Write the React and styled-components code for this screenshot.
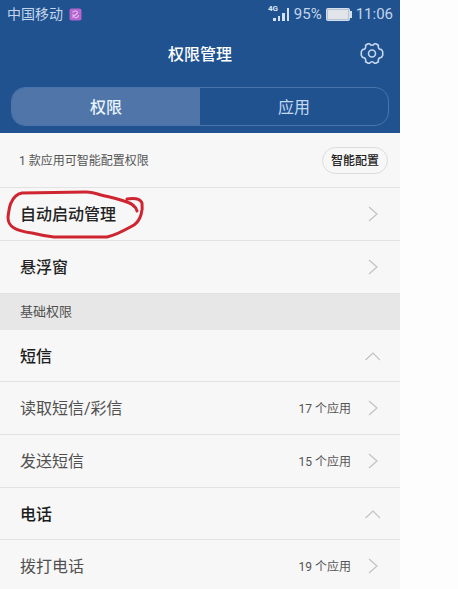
import React, { useState } from 'react';
import styled, { createGlobalStyle, css } from 'styled-components';

const blue = '#1f528f';
const hairline = '#e2e2e2';

const GlobalStyle = createGlobalStyle`
  * {
    box-sizing: border-box;
  }

  html {
    scrollbar-width: none;
  }

  body {
    margin: 0;
    background: #fdfdfd;
    font-family: Roboto, 'Noto Sans CJK SC', sans-serif;
  }

  button {
    font-family: inherit;
    cursor: pointer;
  }
`;

const Page = styled.div`
  padding-right: 58px;
`;

const Screen = styled.main`
  background: #f7f7f7;
  color: #222;
`;

const Header = styled.header`
  padding-bottom: 7px;
  background: ${blue};
  color: #fff;
`;

const StatusBar = styled.div`
  display: flex;
  align-items: center;
  justify-content: space-between;
  height: 28px;
  padding: 0 7px;
  color: #c3d5ec;
  font-size: 14px;
  line-height: 20px;
`;

const StatusGroup = styled.div`
  display: flex;
  align-items: center;
  gap: ${props => props.$gap}px;
`;

const Clock = styled.time`
  font-size: 15px;
`;

const Charge = styled.span`
  font-size: 15px;
`;

const TitleBar = styled.div`
  display: grid;
  grid-template-columns: 24px 1fr 24px;
  align-items: center;
  height: 52px;
  padding: 0 16px;
`;

const Title = styled.h1`
  grid-column: 2;
  margin: 0;
  padding-top: 2px;
  text-align: center;
  font-size: 16px;
  font-weight: 500;
  line-height: 24px;
`;

const IconButton = styled.button`
  display: flex;
  align-items: center;
  justify-content: center;
  width: 24px;
  height: 24px;
  padding: 0;
  border: 0;
  background: none;
  color: #c6d8ee;
`;

const Tabs = styled.div`
  display: flex;
  height: 39px;
  margin: 7px 11px 0;
  border: 1px solid #4a74ab;
  border-radius: 14px;
  overflow: hidden;
`;

const Tab = styled.button`
  flex: 1;
  padding: 2px 0 0;
  border: 0;
  background: none;
  color: #c3d9f3;
  font-size: 16px;
  line-height: 24px;

  ${props => props.$active && css`
    background: #5075a8;
    color: #e6f3fc;
    font-weight: 500;
  `}
`;

const Notice = styled.section`
  display: flex;
  align-items: center;
  justify-content: space-between;
  height: 55px;
  padding: 0 12px 0 19px;
  border-bottom: 1px solid ${hairline};
`;

const NoticeText = styled.p`
  margin: 0;
  padding-top: 2px;
  color: #555;
  font-size: 12px;
  line-height: 20px;
`;

const PillButton = styled.button`
  height: 27px;
  padding: 2px 8px 0;
  border: 1px solid #dcdcdc;
  border-radius: 14px;
  background: #f7f7f7;
  color: #222;
  font-size: 12px;
  font-weight: 500;
  line-height: 20px;
`;

const List = styled.ul`
  margin: 0;
  padding: 0;
  list-style: none;
`;

const Item = styled.li`
  position: relative;
  border-bottom: 1px solid ${hairline};
`;

const rowLayout = css`
  display: flex;
  align-items: center;
  width: 100%;
  padding: 0 20px;
  border: 0;
  background: none;
  text-align: left;
  text-decoration: none;
  font-size: 16px;
  line-height: 24px;
`;

const RowLink = styled.a`
  ${rowLayout}
  height: 52px;
  color: ${props => (props.$strong ? '#222' : '#505050')};
  font-weight: ${props => (props.$strong ? 500 : 400)};
`;

const GroupButton = styled.button`
  ${rowLayout}
  height: 51px;
  color: #1c1c1c;
  font-weight: 500;
`;

const Label = styled.span`
  flex: 1;
  padding-top: 2px;
`;

const Count = styled.span`
  margin-right: 15px;
  padding-top: 2px;
  color: #555;
  font-size: 12px;
  font-weight: 400;
`;

const SectionTitle = styled.h2`
  display: flex;
  align-items: center;
  height: 36px;
  margin: 0;
  padding: 0 20px;
  background: #e7e7e7;
  color: #505050;
  font-size: 13px;
  font-weight: 400;
  line-height: 20px;
`;

const Scribble = styled.svg`
  position: absolute;
  top: 0;
  left: 4px;
  pointer-events: none;
`;

const ChevronIcon = styled.svg`
  flex: none;
  fill: none;
  stroke: #c2c2c2;
  stroke-width: 1.2;
`;

const ChevronRight = () => (
  <ChevronIcon width="14" height="18" viewBox="0 0 14 18" aria-hidden="true">
    <path d="M3 2l8 7-8 7" />
  </ChevronIcon>
);

const ChevronUp = ({ open }) => (
  <ChevronIcon width="16" height="14" viewBox="0 0 16 14" aria-hidden="true">
    <path d={open ? 'M1.5 11L9 4l7 7' : 'M1.5 4L9 11l7-7'} />
  </ChevronIcon>
);

const AppBadge = () => (
  <svg width="13" height="13" viewBox="0 0 13 13" aria-hidden="true">
    <rect x="0.5" y="0.5" width="12" height="12" rx="2" fill="#b565d0" />
    <path d="M3.5 4.5c1-2 4-2 5-.5M3.5 9.5l5.5-5M9.5 7c0 2-2 3.2-4 2.5M3.5 6.5l2 2" fill="none" stroke="#e6bff0" strokeWidth="1.1" />
  </svg>
);

const SignalIcon = () => (
  <svg width="22" height="18" viewBox="0 0 22 18" role="img" aria-label="4G">
    <text x="0" y="6" fill="#dce8f6" fontSize="8" fontWeight="700">4G</text>
    <g fill="#d3e1f2">
      <rect x="5" y="13" width="3" height="3" />
      <rect x="10" y="11" width="2" height="5" />
      <rect x="14" y="8" width="3" height="8" />
      <rect x="19" y="3" width="2" height="13" />
    </g>
  </svg>
);

const BatteryIcon = () => (
  <svg width="26" height="13" viewBox="0 0 26 13" aria-hidden="true">
    <rect x="0.5" y="0.5" width="23" height="12" rx="1" fill="#b4c3d8" stroke="#d6e0ec" />
    <rect x="2" y="2" width="20" height="9" fill="#e1e4e9" />
    <rect x="24" y="3" width="2" height="7" fill="#d6e0ec" />
  </svg>
);

const GearIcon = () => (
  <svg width="24" height="24" viewBox="0 0 24 24" fill="none" stroke="currentColor" strokeWidth="1.6" strokeLinejoin="round" aria-hidden="true">
    <path d="M8.2 1.700h1.300Q12 4.900 14.500 1.700h1.300l2.600 1.500q-.8 4.300 3.100 4.400l1.200 2.100v3.600l-1.200 2.100q-3.900.1-3.100 4.400l-2.600 1.500h-1.300Q12 18.100 9.500 21.300H8.200l-2.600-1.500q.8-4.300-3.100-4.400l-1.200-2.100V9.700l1.200-2.100q3.900-.1 3.100-4.400z" />
    <circle cx="12" cy="11.5" r="3.500" />
  </svg>
);

const RedCircle = () => (
  <Scribble width="144" height="52" viewBox="0 0 144 52" aria-hidden="true">
    <path
      d="M133 23C132 18 127 15 120 13C111 10 105 9 97 7C91 5 88 4 82 4L18 5C13 6 9 10 7 15C5 19 5 23 4 29C4 34 5 37 10 40C15 43 20 44 28 45C36 47 42 48 50 49L103 49C113 47 121 42 130 37C137 32 139 22 138 15C136 10 130 10 123 11"
      fill="none"
      stroke="#cf2530"
      strokeWidth="3"
      strokeLinecap="round"
      strokeLinejoin="round"
    />
  </Scribble>
);

const groups = [
  {
    name: '短信',
    permissions: [
      { name: '读取短信/彩信', count: 17 },
      { name: '发送短信', count: 15 },
    ],
  },
  {
    name: '电话',
    permissions: [{ name: '拨打电话', count: 19 }],
  },
];

const PermissionGroup = ({ group }) => {
  const [open, setOpen] = useState(true);

  return (
    <>
      <Item>
        <GroupButton type="button" aria-expanded={open} onClick={() => setOpen(!open)}>
          <Label>{group.name}</Label>
          <ChevronUp open={open} />
        </GroupButton>
      </Item>
      {open && group.permissions.map(permission => (
        <Item key={permission.name}>
          <RowLink href="#">
            <Label>{permission.name}</Label>
            <Count>{permission.count} 个应用</Count>
            <ChevronRight />
          </RowLink>
        </Item>
      ))}
    </>
  );
};

const App = () => {
  const [tab, setTab] = useState('权限');

  return (
    <Page>
      <GlobalStyle />
      <Screen>
        <Header>
          <StatusBar>
            <StatusGroup $gap={6}>
              <span>中国移动</span>
              <AppBadge />
            </StatusGroup>
            <StatusGroup $gap={4}>
              <SignalIcon />
              <Charge>95%</Charge>
              <BatteryIcon />
              <Clock>11:06</Clock>
            </StatusGroup>
          </StatusBar>
          <TitleBar>
            <Title>权限管理</Title>
            <IconButton type="button" aria-label="设置"><GearIcon /></IconButton>
          </TitleBar>
          <Tabs role="tablist">
            {['权限', '应用'].map(name => (
              <Tab
                key={name}
                type="button"
                role="tab"
                aria-selected={tab === name}
                $active={tab === name}
                onClick={() => setTab(name)}
              >
                {name}
              </Tab>
            ))}
          </Tabs>
        </Header>
        <Notice>
          <NoticeText>1 款应用可智能配置权限</NoticeText>
          <PillButton type="button">智能配置</PillButton>
        </Notice>
        <List>
          <Item>
            <RowLink href="#" $strong>
              <Label>自动启动管理</Label>
              <ChevronRight />
            </RowLink>
            <RedCircle />
          </Item>
          <Item>
            <RowLink href="#" $strong>
              <Label>悬浮窗</Label>
              <ChevronRight />
            </RowLink>
          </Item>
        </List>
        <SectionTitle>基础权限</SectionTitle>
        <List>
          {groups.map(group => <PermissionGroup key={group.name} group={group} />)}
        </List>
      </Screen>
    </Page>
  );
};

export default App;
